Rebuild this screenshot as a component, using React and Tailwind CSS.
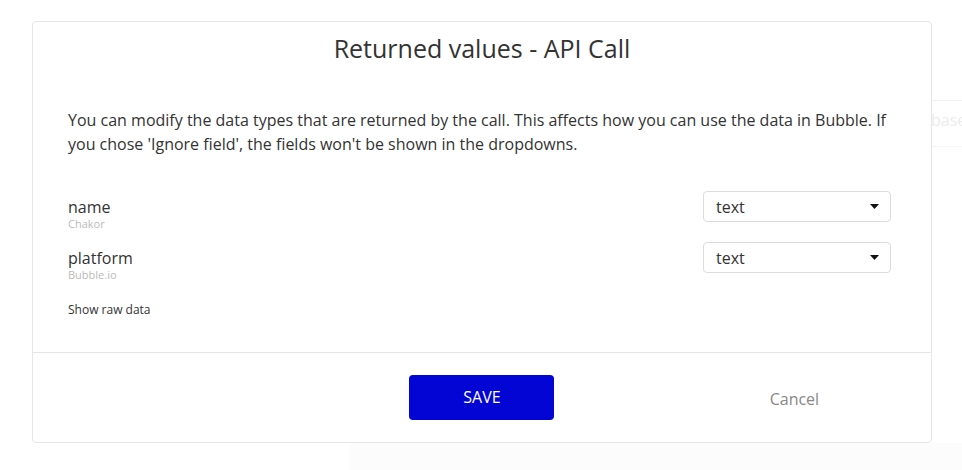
import React from "react";

const fields = [
  { name: "name", sample: "Chakor", type: "text" },
  { name: "platform", sample: "Bubble.io", type: "text" },
];

function TypeSelect({ value }) {
  return (
    <div className="mr-[5px] flex h-[31px] w-[188px] items-center justify-between rounded-[4px] border border-[#dcdcdc] bg-white pl-[12px] pr-[11px] text-[16px] text-[#333]">
      <span>{value}</span>
      <svg width="9" height="5" viewBox="0 0 9 5">
        <path d="M0 0 L9 0 L4.5 5 Z" fill="#111" />
      </svg>
    </div>
  );
}

function FieldRow({ field }) {
  return (
    <div className="flex items-start justify-between">
      <div className="pt-[6px]">
        <div className="text-[16px] leading-[20px] text-[#333]">{field.name}</div>
        <div className="text-[11px] leading-[14px] text-[#bbb]">{field.sample}</div>
      </div>
      <TypeSelect value={field.type} />
    </div>
  );
}

export default function App() {
  return (
    <div
      className="relative h-[470px] w-[962px] overflow-hidden bg-white"
      style={{ fontFamily: '"Open Sans", "Noto Sans", sans-serif' }}
    >
      {/* faint page behind the modal */}
      <div className="absolute left-[930px] top-[100px] h-px w-[40px] bg-[#f2f2f2]" />
      <div className="absolute left-[922px] top-[108px] text-[16px] text-[#ececec]">ebase</div>
      <div className="absolute left-[932px] top-[146px] h-px w-[40px] bg-[#f4f4f4]" />
      <div className="absolute left-[350px] top-[443px] h-[30px] w-[620px] bg-[#fcfcfc]" />

      <div className="absolute left-[32px] top-[21px] flex h-[422px] w-[900px] flex-col rounded-[4px] border border-[#e6e6e6] bg-white">
        <div className="px-[35px]">
          <h1 className="pt-[10px] text-center text-[25px] leading-[32px] text-[#333]">
            Returned values - API Call
          </h1>
          <p className="mt-[44px] text-[16px] leading-[24px] text-[#333]">
            You can modify the data types that are returned by the call. This affects how you can use the data in Bubble. If you chose 'Ignore field', the fields won't be shown in the dropdowns.
          </p>
          <div className="mt-[35px] flex flex-col gap-[11px]">
            {fields.map((f) => (
              <FieldRow key={f.name} field={f} />
            ))}
          </div>
          <div className="mt-[20px] text-[12px] leading-[16px] text-[#333]">Show raw data</div>
        </div>

        <div className="mt-[34px] grid flex-1 grid-cols-3 items-center border-t border-[#e6e6e6] pb-[1px]">
          <div />
          <div className="flex justify-center">
            <button className="h-[45px] w-[145px] rounded-[4px] bg-[#0205d3] text-[16px] text-white">
              SAVE
            </button>
          </div>
          <div className="pl-[138px] pt-[3px] text-[16px] text-[#888]">Cancel</div>
        </div>
      </div>
    </div>
  );
}
